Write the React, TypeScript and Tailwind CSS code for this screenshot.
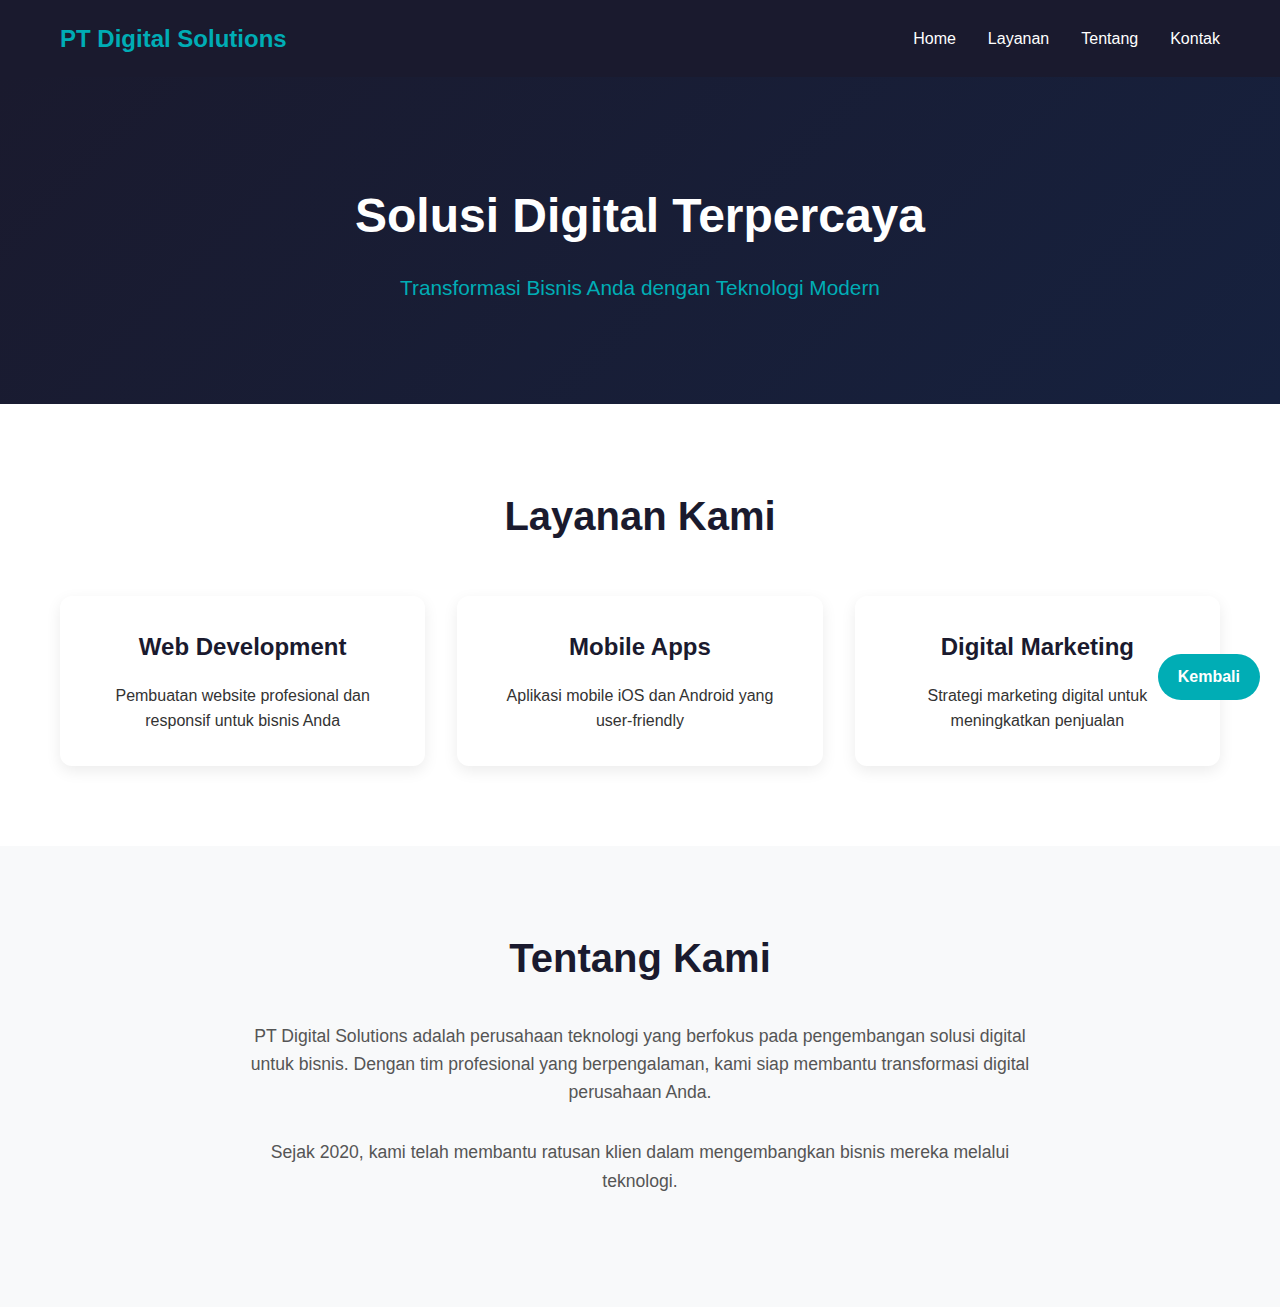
export default function App() {
  const services = [
    { title: 'Web Development', desc: 'Pembuatan website profesional dan responsif untuk bisnis Anda' },
    { title: 'Mobile Apps', desc: 'Aplikasi mobile iOS dan Android yang user-friendly' },
    { title: 'Digital Marketing', desc: 'Strategi marketing digital untuk meningkatkan penjualan' },
  ];

  return (
    <div className="min-h-screen bg-white font-['Liberation_Sans',Arial,sans-serif]">
      <header className="h-[77px] bg-[#1a1a2e] px-[60px] flex items-center justify-between">
        <div className="text-[24px] font-bold text-[#00adb5]">PT Digital Solutions</div>
        <nav className="flex gap-8 text-[16px] text-white">
          <a href="#">Home</a>
          <a href="#">Layanan</a>
          <a href="#">Tentang</a>
          <a href="#">Kontak</a>
        </nav>
      </header>

      <section className="h-[327px] bg-[linear-gradient(135deg,#1a1a2e_0%,#16213e_100%)] pt-[111px] text-center">
        <h1 className="text-[48px] leading-[55px] font-bold text-white mb-[29px]">Solusi Digital Terpercaya</h1>
        <p className="text-[20.8px] leading-[31px] text-[#00adb5]">Transformasi Bisnis Anda dengan Teknologi Modern</p>
      </section>

      <section className="pt-[88px] pb-[80px] px-[60px]">
        <h2 className="text-center text-[40px] leading-[48px] font-bold text-[#1a1a2e] mb-[56px]">Layanan Kami</h2>
        <div className="grid grid-cols-3 gap-8">
          {services.map((s) => (
            <div
              key={s.title}
              className="h-[170px] bg-white rounded-xl shadow-[0_5px_15px_rgba(0,0,0,0.08)] px-[30px] pt-[36px] text-center"
            >
              <h3 className="text-[24px] leading-[29px] font-bold text-[#1a1a2e] mb-[22px]">{s.title}</h3>
              <p className="text-[16px] leading-[25px] text-[#333]">{s.desc}</p>
            </div>
          ))}
        </div>
      </section>

      <section className="bg-[#f8f9fa] pt-[88px] pb-[140px] px-[60px]">
        <h2 className="text-center text-[40px] leading-[48px] font-bold text-[#1a1a2e] mb-[40px]">Tentang Kami</h2>
        <div className="max-w-[800px] mx-auto text-center text-[17.6px] leading-[1.6] text-[#555]">
          <p className="mb-8">
            PT Digital Solutions adalah perusahaan teknologi yang berfokus pada pengembangan solusi digital untuk bisnis. Dengan tim profesional yang berpengalaman, kami siap membantu transformasi digital perusahaan Anda.
          </p>
          <p>Sejak 2020, kami telah membantu ratusan klien dalam mengembangkan bisnis mereka melalui teknologi.</p>
        </div>
      </section>

      <button className="fixed right-5 top-1/2 h-[46px] px-5 rounded-full bg-[#00adb5] text-white font-bold text-[16px]">
        Kembali
      </button>
    </div>
  );
}
